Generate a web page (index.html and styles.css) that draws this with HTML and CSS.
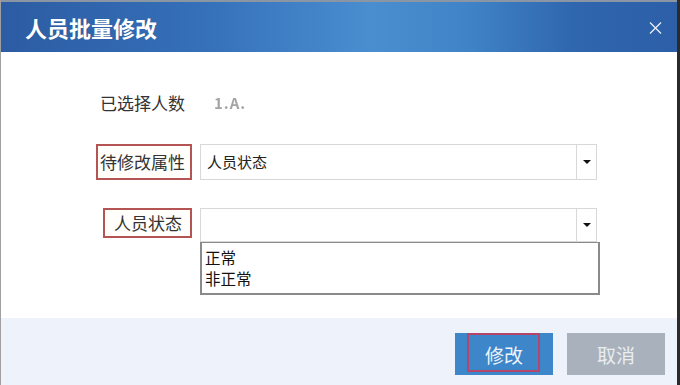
FILE: index.html
```html
<!DOCTYPE html>
<html lang="zh-CN">
<head>
<meta charset="utf-8">
<title>人员批量修改</title>
<link rel="stylesheet" href="styles.css">
</head>
<body>
<div class="dialog">
  <div class="titlebar">
    <span class="title">人员批量修改</span>
    <svg class="close" width="13" height="12" viewBox="0 0 13 12"><path d="M1 0.5 L12 11.5 M12 0.5 L1 11.5" stroke="#e4ecf6" stroke-width="1.4" fill="none"/></svg>
  </div>
  <div class="body">
    <div class="form">
      <div class="label label-plain">已选择人数</div>
      <div class="value">1.A.</div>

      <div class="label label-box label-attr">待修改属性</div>
      <div class="select select-attr">
        <span class="select-text">人员状态</span>
        <span class="arrow"></span>
      </div>

      <div class="label label-box label-state">人员状态</div>
      <div class="select-wrap">
        <div class="select select-state">
          <span class="select-text"></span>
          <span class="arrow"></span>
        </div>
        <ul class="options">
          <li>正常</li>
          <li>非正常</li>
        </ul>
      </div>
    </div>
  </div>
  <div class="footer">
    <button class="btn btn-primary">修改<span class="mark"></span></button>
    <button class="btn btn-cancel">取消</button>
  </div>
</div>
</body>
</html>
```
FILE: styles.css
```css
* { box-sizing: border-box; }
html, body { margin: 0; padding: 0; background: #fff; }
body {
  font-family: "Noto Sans CJK SC", "Noto Sans", sans-serif;
  color: #333;
  width: 680px;
  height: 385px;
  overflow: hidden;
}
.dialog {
  width: 680px;
  height: 385px;
  display: flex;
  flex-direction: column;
  border-left: 1px solid #a0a0a0;
  border-right: 3px solid #2b2b2b;
  background: #fff;
}
.titlebar {
  height: 52px;
  flex: none;
  border-top: 2px solid #8a96a3;
  display: flex;
  align-items: center;
  justify-content: space-between;
  padding: 0 15px 0 24px;
  background: linear-gradient(90deg, #2c5ca3 0%, #3570b9 30%, #4a8ed0 55%, #4185c8 68%, #2f66ae 85%, #2c5fa8 100%);
}
.title {
  color: #fff;
  font-size: 22px;
  font-weight: bold;
  line-height: 24px;
  text-shadow: 0 0 1px rgba(0,0,0,0.2);
}
.close { display: block; margin-top: 2px; }
.body { flex: 1; }
.form {
  display: grid;
  grid-template-columns: 191px 400px;
  column-gap: 8px;
  align-items: start;
  padding-top: 41px;
}
.label {
  justify-self: end;
  font-size: 17px;
  color: #333;
  white-space: nowrap;
}
.label-plain {
  line-height: 20px;
  padding-right: 7px;
}
.value {
  margin-left: 14px;
  font-size: 15px;
  line-height: 20px;
  font-weight: bold;
  color: #a4a4a4;
  letter-spacing: 1px;
  filter: blur(0.6px);
}
.label-box {
  border: 2px solid #b55553;
  background: #fffefb;
}
.label-attr {
  margin-top: 31px;
  line-height: 32px;
  padding: 0 5px 0 2px;
}
.label-state {
  margin-top: 28px;
  line-height: 26px;
  padding: 0 8px 0 9px;
  justify-self: end;
}
.select {
  display: flex;
  width: 397px;
  border: 1px solid #d8d8d8;
  background: #fff;
}
.select-attr { height: 36px; margin-top: 31px; }
.select-state { height: 34px; }
.select-wrap { margin-top: 28px; }
.select-text {
  flex: 1;
  font-size: 15px;
  line-height: 34px;
  padding-left: 6px;
  color: #222;
  border-right: 1px solid #d8d8d8;
}
.arrow {
  width: 19px;
  display: flex;
  align-items: center;
  justify-content: center;
}
.arrow::before {
  content: "";
  border-left: 4px solid transparent;
  border-right: 4px solid transparent;
  border-top: 4px solid #111;
}
.options {
  list-style: none;
  margin: 0;
  padding: 4px 0 0 3px;
  width: 400px;
  height: 53px;
  border: 2px solid #8a8a8a;
  border-top-width: 1px;
  font-size: 15.5px;
  line-height: 21px;
  color: #111;
}
.footer {
  height: 67px;
  flex: none;
  background: #eef2fa;
  display: flex;
  justify-content: flex-end;
  align-items: flex-start;
  gap: 14px;
  padding: 15px 12px 0 0;
}
.btn {
  position: relative;
  width: 98px;
  height: 42px;
  border: none;
  font-family: inherit;
  font-size: 19px;
  padding: 0;
}
.btn-primary { background: #3d86c9; color: #eef4fb; }
.btn-cancel { background: #a9b2bc; color: #e9edf1; }
.mark {
  position: absolute;
  left: 12px;
  top: 0;
  width: 73px;
  height: 39px;
  border: 2px solid #b4466c;
}
```
